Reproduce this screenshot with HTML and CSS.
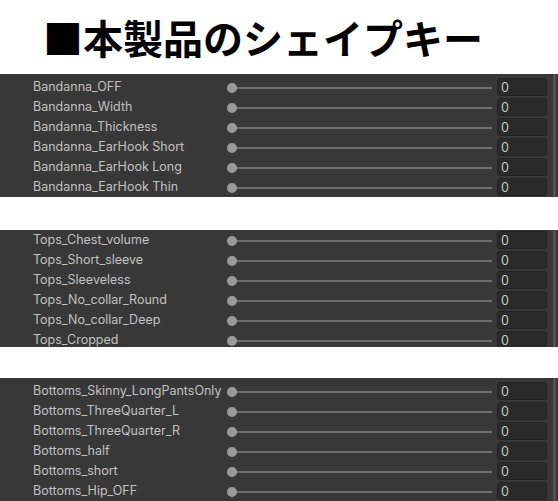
FILE: index.html
```html
<!DOCTYPE html>
<html lang="ja">
<head>
<meta charset="utf-8">
<title>本製品のシェイプキー</title>
<link rel="stylesheet" href="styles.css">
</head>
<body>
<h1 class="title">■本製品のシェイプキー</h1>

<section class="panel panel-full">
  <div class="rows">
    <div class="row"><span class="label">Bandanna_OFF</span><span class="slider"></span><span class="field">0</span></div>
    <div class="row"><span class="label">Bandanna_Width</span><span class="slider"></span><span class="field">0</span></div>
    <div class="row"><span class="label">Bandanna_Thickness</span><span class="slider"></span><span class="field">0</span></div>
    <div class="row"><span class="label">Bandanna_EarHook Short</span><span class="slider"></span><span class="field">0</span></div>
    <div class="row"><span class="label">Bandanna_EarHook Long</span><span class="slider"></span><span class="field">0</span></div>
    <div class="row"><span class="label">Bandanna_EarHook Thin</span><span class="slider"></span><span class="field">0</span></div>
  </div>
  <div class="scrollbar"></div>
</section>

<section class="panel panel-short">
  <div class="rows rows-lifted">
    <div class="row"><span class="label">Tops_Chest_volume</span><span class="slider"></span><span class="field">0</span></div>
    <div class="row"><span class="label">Tops_Short_sleeve</span><span class="slider"></span><span class="field">0</span></div>
    <div class="row"><span class="label">Tops_Sleeveless</span><span class="slider"></span><span class="field">0</span></div>
    <div class="row"><span class="label">Tops_No_collar_Round</span><span class="slider"></span><span class="field">0</span></div>
    <div class="row"><span class="label">Tops_No_collar_Deep</span><span class="slider"></span><span class="field">0</span></div>
    <div class="row"><span class="label">Tops_Cropped</span><span class="slider"></span><span class="field">0</span></div>
  </div>
  <div class="scrollbar"></div>
</section>

<section class="panel panel-bottom">
  <div class="rows">
    <div class="row"><span class="label">Bottoms_Skinny_LongPantsOnly</span><span class="slider"></span><span class="field">0</span></div>
    <div class="row"><span class="label">Bottoms_ThreeQuarter_L</span><span class="slider"></span><span class="field">0</span></div>
    <div class="row"><span class="label">Bottoms_ThreeQuarter_R</span><span class="slider"></span><span class="field">0</span></div>
    <div class="row"><span class="label">Bottoms_half</span><span class="slider"></span><span class="field">0</span></div>
    <div class="row"><span class="label">Bottoms_short</span><span class="slider"></span><span class="field">0</span></div>
    <div class="row"><span class="label">Bottoms_Hip_OFF</span><span class="slider"></span><span class="field">0</span></div>
  </div>
  <div class="scrollbar"></div>
</section>
</body>
</html>
```
FILE: styles.css
```css
html, body {
  margin: 0;
  padding: 0;
  background: #ffffff;
  width: 558px;
  height: 501px;
  overflow: hidden;
}

.title {
  margin: 0;
  height: 74px;
  box-sizing: border-box;
  padding: 12px 0 0 43px;
  font-family: "Noto Sans CJK JP", "Noto Sans", sans-serif;
  font-size: 40px;
  font-weight: 600;
  line-height: 50px;
  color: #000000;
}

/* inspector block */
.panel {
  display: flex;
  background: #383838;
  overflow: hidden;
}

.panel-full {
  height: 123px;
  margin-bottom: 33px;
}

.panel-short {
  height: 117px;
  margin-bottom: 31px;
}

.panel-bottom {
  height: 123px;
}

.rows {
  flex: 1;
  padding-top: 2px;
}

.rows-lifted {
  padding-top: 0;
  margin-top: -1px;
}

.scrollbar {
  width: 3px;
  margin: 0 2px 0 6px;
  background: #505050;
}

.row {
  height: 20px;
  display: grid;
  grid-template-columns: 189px 265px 50px;
  column-gap: 5px;
  align-items: center;
  padding-left: 33px;
  font-family: "Inter", "Noto Sans", sans-serif;
  font-size: 12.5px;
  color: #c2c2c2;
}

.label {
  align-self: start;
  padding-top: 1px;
  white-space: nowrap;
  line-height: 20px;
}

/* slider track with the handle at its minimum */
.slider {
  position: relative;
  height: 20px;
}

.slider::before {
  content: "";
  position: absolute;
  left: 5px;
  right: 0;
  top: 10px;
  height: 2px;
  background: #6e6e6e;
}

.slider::after {
  content: "";
  position: absolute;
  left: 0;
  top: 6px;
  width: 10px;
  height: 10px;
  border-radius: 50%;
  background: #9b9b9b;
}

.field {
  height: 18px;
  box-sizing: border-box;
  border: 1px solid #232323;
  border-radius: 3px;
  background: #2a2a2a;
  padding-left: 3px;
  line-height: 17px;
  font-size: 12.5px;
  color: #c8c8c8;
}
```
